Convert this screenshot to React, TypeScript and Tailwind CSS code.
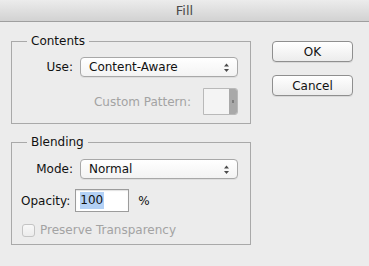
import React from 'react';

const font = { fontFamily: '"DejaVu Sans", "Liberation Sans", sans-serif' };

function SelectBox({ value }: { value: string }) {
  return (
    <div className="flex h-[20px] w-[158px] items-center justify-between rounded-[4px] border border-[#a8a8a8] bg-gradient-to-b from-white to-[#f3f3f3] pl-[8px] pr-[7px] text-[12px] text-[#111] shadow-[0_1px_0_rgba(0,0,0,0.06)]">
      <span>{value}</span>
      <svg width="7" height="10" viewBox="0 0 7 10" className="mt-[1px]">
        <path d="M3.5 0.5 L6 3.5 L1 3.5 Z" fill="#4a4a4a" />
        <path d="M3.5 9 L6 6 L1 6 Z" fill="#4a4a4a" />
      </svg>
    </div>
  );
}

function Group({ title, children, className }: { title: string; children: React.ReactNode; className?: string }) {
  return (
    <fieldset className={`border border-[#a9a9a9] ${className ?? ''}`}>
      <legend className="ml-[15px] px-[4px] text-[12px] leading-[16px] text-[#111]">{title}</legend>
      {children}
    </fieldset>
  );
}

function Button({ label }: { label: string }) {
  return (
    <button className="flex h-[21px] w-[81px] items-center justify-center rounded-[4px] border border-[#8f8f8f] bg-gradient-to-b from-white to-[#ececec] text-[12px] text-[#111] shadow-[0_1px_0_rgba(0,0,0,0.08)]">
      {label}
    </button>
  );
}

export default function App() {
  return (
    <div className="h-[266px] w-[369px] overflow-hidden bg-[#ececec]" style={font}>
      {/* Title bar */}
      <div className="flex h-[22px] items-center justify-center border-b border-[#9f9f9f] bg-gradient-to-b from-[#ececec] to-[#d2d2d2] text-[13px] text-[#4a4a4a]">
        Fill
      </div>

      <div className="flex gap-[21px] pl-[11px] pt-[11px]">
        {/* Left column */}
        <div className="flex w-[240px] flex-col gap-[10px]">
          <Group title="Contents" className="pb-[8px]">
            <div className="flex items-center pt-[8px]">
              <span className="w-[61px] text-right text-[12px] text-[#111]">Use:</span>
              <div className="ml-[7px]">
                <SelectBox value="Content-Aware" />
              </div>
            </div>
            <div className="mt-[11px] flex items-center justify-end gap-[12px] pr-[12px]">
              <span className="text-[12px] text-[#a3a3a3]">Custom Pattern:</span>
              <div className="flex h-[27px] w-[35px] overflow-hidden rounded-r-[3px] border border-[#b9b9b9] bg-[#f4f4f4]">
                <div className="flex-1" />
                <div className="flex w-[8px] items-center justify-center bg-[#a9a9a9]">
                  <div className="h-[3px] w-[2px] bg-[#7d7d7d]" />
                </div>
              </div>
            </div>
          </Group>

          <Group title="Blending" className="pb-[5px]">
            <div className="flex items-center pt-[9px]">
              <span className="w-[61px] text-right text-[12px] text-[#111]">Mode:</span>
              <div className="ml-[7px]">
                <SelectBox value="Normal" />
              </div>
            </div>
            <div className="mt-[10px] flex items-center">
              <span className="ml-[9px] text-[12px] text-[#111]">Opacity:</span>
              <div className="ml-[5px] flex h-[23px] w-[54px] items-center border border-[#9c9c9c] bg-white pl-[4px] shadow-[inset_0_1px_1px_rgba(0,0,0,0.12)]">
                <span className="bg-[#b3d1f5] pr-[1px] text-[12px] leading-[17px] text-[#111]">100</span>
              </div>
              <span className="ml-[9px] text-[12px] text-[#111]">%</span>
            </div>
            <div className="mt-[9px] flex items-center">
              <div className="ml-[10px] h-[13px] w-[13px] rounded-[3px] border border-[#c4c4c4] bg-gradient-to-b from-[#f8f8f8] to-[#ececec]" />
              <span className="ml-[5px] text-[12px] text-[#a3a3a3]">Preserve Transparency</span>
            </div>
          </Group>
        </div>

        {/* Right column */}
        <div className="flex flex-col gap-[13px] pt-[8px]">
          <Button label="OK" />
          <Button label="Cancel" />
        </div>
      </div>
    </div>
  );
}
